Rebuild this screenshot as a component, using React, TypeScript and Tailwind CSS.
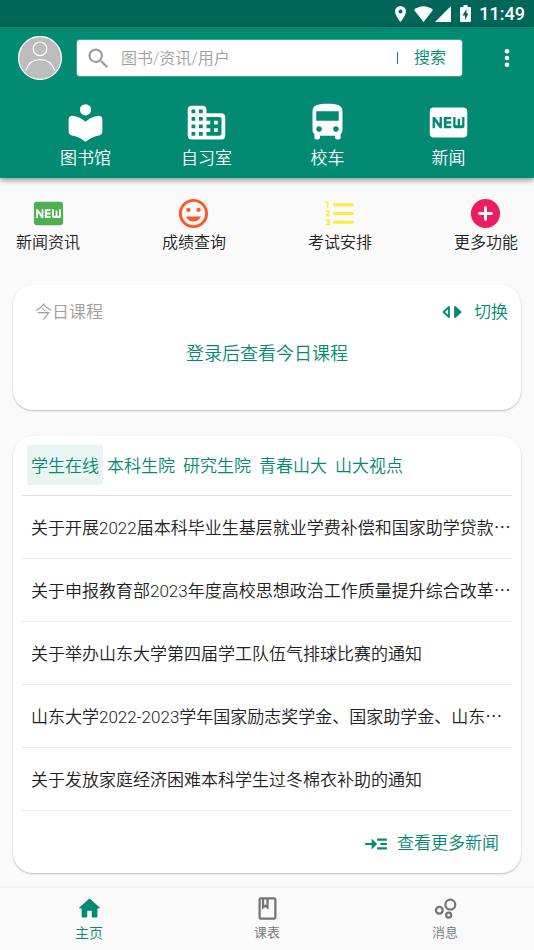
import type { ReactNode } from "react";
import {
    MdDirectionsBus,
    MdFiberNew,
    MdInsertEmoticon,
    MdOutlineClass,
    MdReadMore,
    MdSearch,
} from "react-icons/md";

interface IconProps {
    className?: string;
}

function LibraryIcon({ className }: IconProps) {
    return (
        <svg viewBox="0 0 24 24" fill="currentColor" className={className} aria-hidden="true">
            <circle cx="12" cy="5.2" r="3" />
            <path d="M12 11.6c-1.9-1.7-4.2-2.8-6.9-3.2C3.9 8.3 3 9.1 3 10.2v6.6c0 1.1.7 1.9 1.8 2.1 2.5.3 4.6 1.4 6.5 2.9.4.4 1 .4 1.4 0 1.9-1.5 4-2.6 6.5-2.9 1.1-.2 1.8-1 1.8-2.1v-6.6c0-1.1-.9-1.9-2.1-1.8-2.7.4-5 1.5-6.9 3.2z" />
        </svg>
    );
}

function DomainIcon({ className }: IconProps) {
    return (
        <svg viewBox="0 0 24 24" fill="currentColor" className={className} aria-hidden="true">
            <path d="M12 7V5c0-1.1-.9-2-2-2H4c-1.1 0-2 .9-2 2v14c0 1.1.9 2 2 2h16c1.1 0 2-.9 2-2V9c0-1.1-.9-2-2-2h-8zM6 19H4v-2h2v2zm0-4H4v-2h2v2zm0-4H4V9h2v2zm0-4H4V5h2v2zm4 12H8v-2h2v2zm0-4H8v-2h2v2zm0-4H8V9h2v2zm0-4H8V5h2v2zm9 12h-7v-2h2v-2h-2v-2h2v-2h-2V9h7c.55 0 1 .45 1 1v8c0 .55-.45 1-1 1zm-1-8h-2v2h2v-2zm0 4h-2v2h2v-2z" />
        </svg>
    );
}

function NumberedListIcon({ className }: IconProps) {
    return (
        <svg viewBox="0 0 24 24" fill="currentColor" className={className} aria-hidden="true">
            <path d="M2.5 17h2v.5h-1v1h1v.5h-2v1h3v-4h-3v1zm1-9h1V4h-2v1h1v3zm-1 3h1.8l-1.8 2.1v.9h3v-1H3.7l1.8-2.1V10h-3v1z" />
            <path d="M8.5 6H21M8.5 12H21M8.5 18H21" stroke="currentColor" strokeWidth="2" strokeLinecap="round" />
        </svg>
    );
}

function AddCircleIcon({ className }: IconProps) {
    return (
        <svg viewBox="0 0 24 24" className={className} aria-hidden="true">
            <circle cx="12" cy="12" r="10" fill="currentColor" />
            <path d="M12 8v8M8 12h8" stroke="#fff" strokeWidth="2" strokeLinecap="round" />
        </svg>
    );
}

function SwitchIcon({ className }: IconProps) {
    return (
        <svg viewBox="0 0 20 14" stroke="currentColor" strokeLinejoin="round" className={className} aria-hidden="true">
            <path d="M7 2v10L1.5 7z" fill="none" strokeWidth="1.8" />
            <path d="M13 2v10l5.5-5z" fill="currentColor" strokeWidth="1.8" />
        </svg>
    );
}

function HomeIcon({ className }: IconProps) {
    return (
        <svg viewBox="0 0 24 24" fill="currentColor" className={className} aria-hidden="true">
            <path d="M10 19v-5h4v5c0 .55.45 1 1 1h3c.55 0 1-.45 1-1v-7h1.7c.46 0 .68-.57.33-.87L12.67 3.6c-.38-.34-.96-.34-1.34 0l-8.36 7.53c-.34.3-.13.87.33.87H5v7c0 .55.45 1 1 1h3c.55 0 1-.45 1-1z" />
        </svg>
    );
}

function BubblesIcon({ className }: IconProps) {
    return (
        <svg viewBox="0 0 24 24" fill="none" stroke="currentColor" strokeWidth="2" className={className} aria-hidden="true">
            <circle cx="6.5" cy="13.6" r="3" />
            <circle cx="16.3" cy="8.6" r="4.4" />
            <circle cx="14.8" cy="17.9" r="2.2" />
        </svg>
    );
}

function StatusBar() {
    return (
        <div className="flex h-[27px] items-center justify-end bg-[#006657] pr-[9px] text-white">
            <svg viewBox="0 0 11 16" className="h-4 w-[11px]" fill="currentColor" aria-hidden="true">
                <path fillRule="evenodd" d="M5.5 0A5.5 5.5 0 0 0 0 5.5C0 9.5 5.5 16 5.5 16S11 9.5 11 5.5A5.5 5.5 0 0 0 5.5 0zm0 7.5a2 2 0 1 1 0-4 2 2 0 0 1 0 4z" />
            </svg>
            <svg viewBox="0 0 19 16" className="ml-2 h-4 w-[19px]" fill="currentColor" aria-hidden="true">
                <path d="M9.5 16 0 4C5.5-1 13.5-1 19 4z" />
            </svg>
            <svg viewBox="0 0 16 16" className="ml-[2px] h-4 w-4" fill="currentColor" aria-hidden="true">
                <path d="M16 0v16H0z" />
            </svg>
            <svg viewBox="0 0 11 17" className="ml-[9px] h-[17px] w-[11px]" fill="currentColor" aria-hidden="true">
                <path fillRule="evenodd" d="M3.5 0h4v2H10q1 0 1 1v13q0 1-1 1H1q-1 0-1-1V3q0-1 1-1h2.5zM6.5 4 2.5 10.5H5V15l3.5-6.5h-2z" />
            </svg>
            <span className="ml-2 font-[Roboto,sans-serif] text-lg leading-6 font-medium">11:49</span>
        </div>
    );
}

function SearchRow() {
    return (
        <div className="flex items-center pr-[9px] pl-[18px]">
            <button type="button" aria-label="我的" className="shrink-0">
                <svg viewBox="0 0 44 44" className="size-11" fill="none" stroke="#fff" aria-hidden="true">
                    <circle cx="22" cy="22" r="21.4" fill="#bdbdbd" strokeWidth="1.3" />
                    <circle cx="22" cy="12.8" r="6.8" strokeWidth="1.2" />
                    <path d="M7.8 34.5C10 27.5 15 23.5 22 23.5s12.5 4 14.7 11" strokeWidth="1.2" />
                </svg>
            </button>
            <form className="ml-[15px] flex h-9 min-w-0 flex-1 items-center rounded-[3px] bg-white pl-2 shadow-[0_0_0_1px_#3fa18f]">
                <MdSearch className="size-[27px] shrink-0 text-[#9e9e9e]" aria-hidden="true" />
                <input
                    type="text"
                    aria-label="搜索内容"
                    placeholder="图书/资讯/用户"
                    className="ml-[9px] h-full min-w-0 flex-1 bg-transparent text-base outline-none placeholder:text-[#9e9e9e]"
                />
                <span className="h-3 w-px bg-[#038a72]" />
                <button type="button" className="px-4 text-base text-[#038a72]">搜索</button>
            </form>
            <button type="button" aria-label="更多" className="ml-[27px] flex h-9 w-9 shrink-0 items-center justify-center text-white">
                <svg viewBox="0 0 6 20" className="h-5 w-[6px]" fill="currentColor" aria-hidden="true">
                    <circle cx="3" cy="3.3" r="2.3" />
                    <circle cx="3" cy="10" r="2.3" />
                    <circle cx="3" cy="16.7" r="2.3" />
                </svg>
            </button>
        </div>
    );
}

interface Entry {
    label: string;
    icon: ReactNode;
}

const mainEntries: Entry[] = [
    { label: "图书馆", icon: <LibraryIcon className="size-[45px]" /> },
    { label: "自习室", icon: <DomainIcon className="size-[45px]" /> },
    { label: "校车", icon: <MdDirectionsBus className="size-[45px]" /> },
    { label: "新闻", icon: <MdFiberNew className="size-[45px]" /> },
];

const shortcuts: Entry[] = [
    { label: "新闻资讯", icon: <MdFiberNew className="size-[35px] text-[#4caf50]" /> },
    { label: "成绩查询", icon: <MdInsertEmoticon className="size-[35px] text-[#ff5722]" /> },
    { label: "考试安排", icon: <NumberedListIcon className="size-[35px] text-[#ffeb3b]" /> },
    { label: "更多功能", icon: <AddCircleIcon className="size-[35px] text-[#e91e63]" /> },
];

const newsTabs = ["学生在线", "本科生院", "研究生院", "青春山大", "山大视点"];

const newsItems = [
    "关于开展2022届本科毕业生基层就业学费补偿和国家助学贷款⋯",
    "关于申报教育部2023年度高校思想政治工作质量提升综合改革⋯",
    "关于举办山东大学第四届学工队伍气排球比赛的通知",
    "山东大学2022-2023学年国家励志奖学金、国家助学金、山东⋯",
    "关于发放家庭经济困难本科学生过冬棉衣补助的通知",
];

const navItems = [
    { label: "主页", icon: <HomeIcon className="size-[27px]" />, active: true },
    { label: "课表", icon: <MdOutlineClass className="size-[27px]" />, active: false },
    { label: "消息", icon: <BubblesIcon className="size-[27px]" />, active: false },
];

export default function App() {
    return (
        <div className="flex min-h-screen flex-col bg-[#fafafa] font-[Roboto,'Noto_Sans_CJK_SC',sans-serif] font-[350] text-[#212121]">
            <StatusBar />

            <header className="relative bg-[#038a72] pt-[9px] pb-2 shadow-[0_2px_6px_rgba(0,0,0,0.45)]">
                <SearchRow />
                <nav className="mt-5 flex px-[25px] text-white">
                    {mainEntries.map((entry) => (
                        <button key={entry.label} type="button" className="flex flex-1 flex-col items-center">
                            {entry.icon}
                            <span className="pt-px text-[17px] leading-6">{entry.label}</span>
                        </button>
                    ))}
                </nav>
            </header>

            <div className="mt-[18px] flex justify-between px-4">
                {shortcuts.map((entry) => (
                    <button key={entry.label} type="button" className="flex flex-col items-center">
                        {entry.icon}
                        <span className="text-base leading-6">{entry.label}</span>
                    </button>
                ))}
            </div>

            {/* Today's courses */}
            <section className="mx-[13px] mt-[30px] rounded-[20px] bg-white pt-[15px] pb-11 shadow-[0_1px_2px_rgba(0,0,0,0.25)]">
                <div className="flex items-center justify-between pr-[13px] pl-[22px] text-[17px] leading-6">
                    <h2 className="text-[#9e9e9e]">今日课程</h2>
                    <button type="button" className="flex items-center gap-3 text-[#038a72]">
                        <SwitchIcon className="h-[14px] w-5" />
                        切换
                    </button>
                </div>
                <p className="mt-[18px] text-center text-lg leading-6 text-[#038a72]">登录后查看今日课程</p>
            </section>

            {/* News */}
            <section className="mx-[13px] mt-[26px] mb-[13px] rounded-[20px] bg-white px-[9px] pt-[9px] text-[17px] shadow-[0_1px_2px_rgba(0,0,0,0.25)]">
                <div className="flex border-b border-[#e0e0e0] pb-[10px] pl-[5px]">
                    {newsTabs.map((tab, index) => (
                        <button
                            key={tab}
                            type="button"
                            className={`h-10 rounded-[3px] px-1 pt-1 whitespace-nowrap text-[#038a72] ${index === 0 ? "bg-[#eaf4f2]" : ""}`}
                        >
                            {tab}
                        </button>
                    ))}
                </div>
                <ul>
                    {newsItems.map((item) => (
                        <li key={item} className="border-b border-[#ebebeb]">
                            <a href="#" className="block truncate pt-[2px] pl-[9px] leading-[60px]">{item}</a>
                        </li>
                    ))}
                </ul>
                <div className="flex h-[62px] items-center justify-end pt-[3px] pr-[13px]">
                    <a href="#" className="flex items-center gap-2 text-[#038a72]">
                        <MdReadMore className="size-[26px]" aria-hidden="true" />
                        查看更多新闻
                    </a>
                </div>
            </section>

            <nav className="mt-auto flex border-t-2 border-[#f2f2f2] pt-[7px] pb-[6px]">
                {navItems.map((item) => (
                    <button
                        key={item.label}
                        type="button"
                        className={`flex flex-1 flex-col items-center ${item.active ? "text-sm text-[#038a72]" : "text-[13px] text-[#757575]"}`}
                    >
                        {item.icon}
                        <span className="leading-[22px]">{item.label}</span>
                    </button>
                ))}
            </nav>
        </div>
    );
}
